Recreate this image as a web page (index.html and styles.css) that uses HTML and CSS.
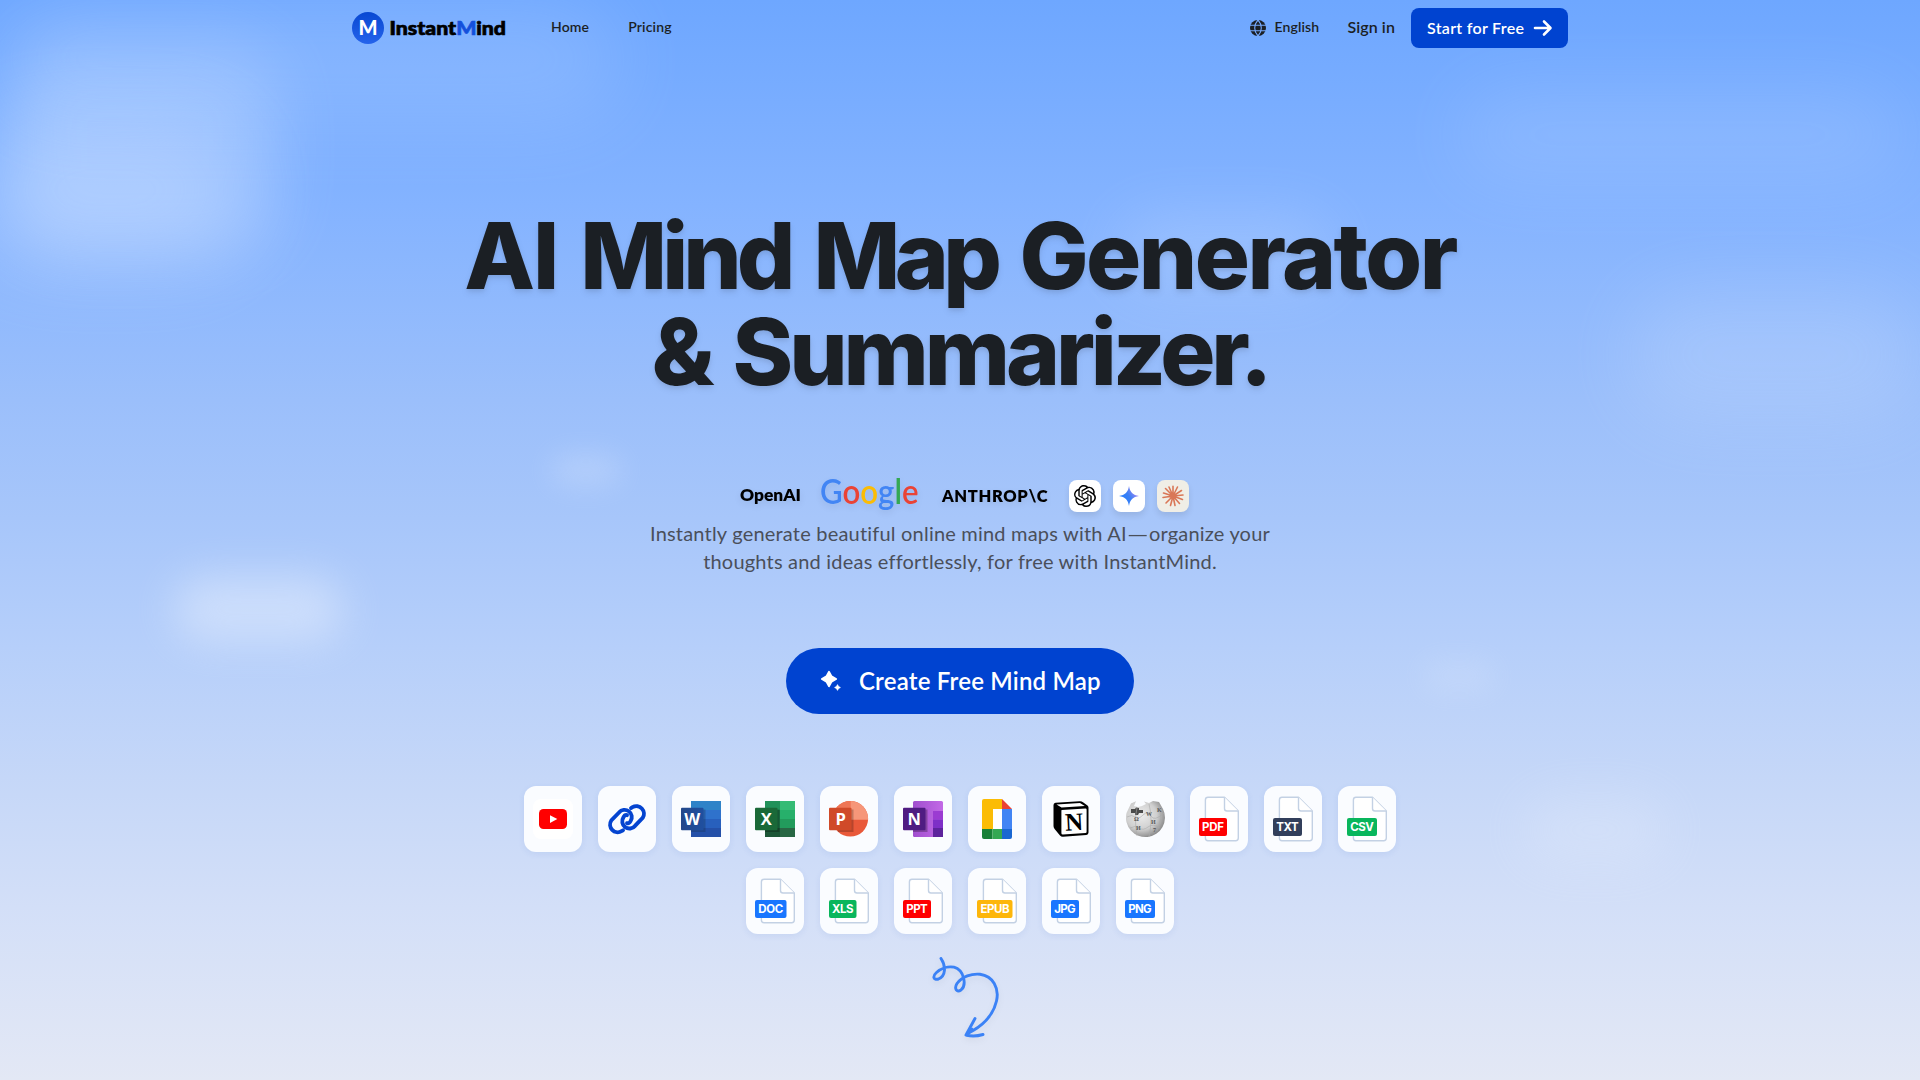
FILE: index.html
```html
<!DOCTYPE html>
<html lang="en">
<head>
<meta charset="utf-8">
<title>InstantMind</title>
<link rel="stylesheet" href="styles.css">
</head>
<body>
<div class="sky" aria-hidden="true">
  <i class="cloud c1"></i><i class="cloud c2"></i><i class="cloud c3"></i><i class="cloud c4"></i><i class="cloud c5"></i>
  <i class="cloud c6"></i><i class="cloud c7"></i><i class="cloud c8"></i><i class="cloud c9"></i><i class="cloud c10"></i>
</div>

<header class="header">
  <a class="brand">
    <svg width="156" height="32" viewBox="0 0 156 32">
      <defs><linearGradient id="lg" x1="0" y1="0" x2="0" y2="1"><stop offset="0" stop-color="#0848d2"/><stop offset="1" stop-color="#2563eb"/></linearGradient></defs>
      <circle cx="16" cy="16" r="16" fill="url(#lg)"/>
      <text class="mark" x="16" y="23">M</text>
      <text class="wordmark" x="37.500" y="23" textLength="116.500" lengthAdjust="spacingAndGlyphs">Instant<tspan class="blue">M</tspan>ind</text>
    </svg>
  </a>
  <nav class="nav"><a>Home</a><a>Pricing</a></nav>
  <div class="actions">
    <a class="lang">
      <svg width="16" height="16" viewBox="0 0 16 16"><circle cx="8" cy="8" r="8" fill="#1b1f24"/><path d="M0 5.300h16M0 10.700h16M8 0C3.600 4.500 3.600 11.500 8 16M8 0c4.400 4.500 4.400 11.500 0 16" fill="none" stroke="#76aaff" stroke-width="1.100"/></svg>
      <span>English</span>
    </a>
    <a class="signin">Sign in</a>
    <a class="start"><span>Start for Free</span>
      <svg width="20" height="18" viewBox="0 0 20 18"><path d="M2 9h15M11 2.500 17.500 9 11 15.500" fill="none" stroke="#fff" stroke-width="2.600" stroke-linecap="round" stroke-linejoin="round"/></svg>
    </a>
  </div>
</header>

<main class="hero">
  <h1 class="title"><span class="line"><span class="w-ai">AI</span> <span class="w-mind">Mind</span> <span class="w-map">Map</span> <span class="w-gen">Generator</span></span><span class="line"><span>&amp;</span> <span class="w-sum">Summarizer.</span></span></h1>

  <div class="partners">
    <svg class="p-openai" width="62" height="32" viewBox="0 0 62 32"><text x="0" y="21" textLength="61" lengthAdjust="spacingAndGlyphs">OpenAI</text></svg>
    <svg class="p-google" width="98" height="48" viewBox="0 0 98 48"><text x="-1" y="32" textLength="98.500" lengthAdjust="spacingAndGlyphs"><tspan fill="#4285f4">G</tspan><tspan fill="#ea4335">o</tspan><tspan fill="#fbbc05">o</tspan><tspan fill="#4285f4">g</tspan><tspan fill="#34a853">l</tspan><tspan fill="#ea4335">e</tspan></text></svg>
    <svg class="p-anthropic" width="106" height="32" viewBox="0 0 106 32"><text x="0" y="22" textLength="105.500" lengthAdjust="spacing">ANTHROP\C</text></svg>
    <div class="models">
      <span class="model"><svg width="22" height="22" viewBox="0 0 24 24"><path d="M22.2819 9.8211a5.9847 5.9847 0 0 0-.5157-4.9108 6.0462 6.0462 0 0 0-6.5098-2.9A6.0651 6.0651 0 0 0 4.9807 4.1818a5.9847 5.9847 0 0 0-3.9977 2.9 6.0462 6.0462 0 0 0 .7427 7.0966 5.98 5.98 0 0 0 .511 4.9107 6.051 6.051 0 0 0 6.5146 2.9001A5.9847 5.9847 0 0 0 13.2599 24a6.0557 6.0557 0 0 0 5.7718-4.2058 5.9894 5.9894 0 0 0 3.9977-2.9001 6.0557 6.0557 0 0 0-.7475-7.0729zm-9.022 12.6081a4.4755 4.4755 0 0 1-2.8764-1.0408l.1419-.0804 4.7783-2.7582a.7948.7948 0 0 0 .3927-.6813v-6.7369l2.02 1.1686a.071.071 0 0 1 .038.052v5.5826a4.504 4.504 0 0 1-4.4945 4.4944zm-9.6607-4.1254a4.4708 4.4708 0 0 1-.5346-3.0137l.142.0852 4.783 2.7582a.7712.7712 0 0 0 .7806 0l5.8428-3.3685v2.3324a.0804.0804 0 0 1-.0332.0615L9.74 19.9502a4.4992 4.4992 0 0 1-6.1408-1.6464zM2.3408 7.8956a4.485 4.485 0 0 1 2.3655-1.9728V11.6a.7664.7664 0 0 0 .3879.6765l5.8144 3.3543-2.0201 1.1685a.0757.0757 0 0 1-.071 0l-4.8303-2.7865A4.504 4.504 0 0 1 2.3408 7.872zm16.5963 3.8558L13.1038 8.364 15.1192 7.2a.0757.0757 0 0 1 .071 0l4.8303 2.7913a4.4944 4.4944 0 0 1-.6765 8.1042v-5.6772a.79.79 0 0 0-.407-.667zm2.0107-3.0231l-.142-.0852-4.7735-2.7818a.7759.7759 0 0 0-.7854 0L9.409 9.2297V6.8974a.0662.0662 0 0 1 .0284-.0615l4.8303-2.7866a4.4992 4.4992 0 0 1 6.6802 4.66zM8.3065 12.863l-2.02-1.1638a.0804.0804 0 0 1-.038-.0567V6.0742a4.4992 4.4992 0 0 1 7.3757-3.4537l-.142.0805L8.704 5.459a.7948.7948 0 0 0-.3927.6813zm1.0976-2.3654l2.602-1.4998 2.6069 1.4998v2.9994l-2.5974 1.4997-2.6067-1.4997Z"/></svg></span>
      <span class="model"><svg width="20" height="20" viewBox="0 0 20 20"><defs><linearGradient id="gem" x1="0" y1=".8" x2="1" y2=".2"><stop offset="0" stop-color="#1c7dff"/><stop offset=".5" stop-color="#3b7ff5"/><stop offset="1" stop-color="#c58af0"/></linearGradient></defs><path d="M10 0C10.800 6 14 9.200 20 10 14 10.800 10.800 14 10 20 9.200 14 6 10.800 0 10 6 9.200 9.200 6 10 0Z" fill="url(#gem)"/></svg></span>
      <span class="model claude"><svg width="22" height="22" viewBox="0 0 22 22"><path d="M11 11V1.200M11 11 15.500 2M11 11 19.500 5.500M11 11 21 10M11 11 20.500 14.500M11 11 17.500 18.500M11 11 13 20.500M11 11 8.500 20.500M11 11 4 18M11 11 1 12.500M11 11 1.500 8M11 11 3.500 3.500M11 11 7 2" stroke="#d97757" stroke-width="1.600" stroke-linecap="round"/></svg></span>
    </div>
  </div>

  <p class="lead"><span class="l1">Instantly generate beautiful online mind maps with AI<span class="dash">—</span>organize your</span><span class="l2">thoughts and ideas effortlessly, for free with InstantMind.</span></p>

  <a class="cta">
    <svg width="22" height="22" viewBox="0 0 22 22" fill="#fff" stroke="#fff" stroke-linejoin="round"><path d="M9 1.800 11.600 6.400 16.200 9 11.600 11.600 9 16.200 6.400 11.600 1.800 9 6.400 6.400Z" stroke-width="1.800"/><path d="M17.500 14.700 18.400 16.600 20.300 17.500 18.400 18.400 17.500 20.300 16.600 18.400 14.700 17.500 16.600 16.600Z" stroke-width="1"/></svg>
    <span>Create Free Mind Map</span>
  </a>

  <div class="formats">
    <span class="card"><svg viewBox="0 0 58 66"><rect x="9" y="13" width="40" height="40" rx="8" fill="#fff"/><rect x="15" y="23" width="28" height="20" rx="4.500" fill="red"/><path d="M26 29.200 33.300 33.100 26 37Z" fill="#fff"/></svg></span>
    <span class="card"><svg viewBox="0 0 58 66"><g fill="none" stroke="#0444d0" stroke-width="3.900" stroke-linecap="round"><path d="M25 44.300 23.500 45.200A7.600 7.600 0 0 1 13.300 34.500L21 26.500A7.200 7.200 0 0 1 32.600 35C31.700 36.800 30.400 37.600 29 37.200"/><path d="M33 22.100 34.500 21.200A7.600 7.600 0 0 1 44.700 31.900L37 39.900A7.200 7.200 0 0 1 25.400 31.400C26.300 29.600 27.600 28.800 29 29.200"/></g></svg></span>
    <span class="card"><svg viewBox="0 0 58 66"><defs><linearGradient id="wb"><stop offset="0" stop-color="#23488a"/><stop offset="1" stop-color="#1f4fa0"/></linearGradient></defs><path fill="#2f83c8" d="M19 15h30v9H19z"/><path fill="#2f72cc" d="M19 24h30v9H19z"/><path fill="#2860bd" d="M19 33h30v9H19z"/><path fill="#2450a8" d="M19 42h30v9H19z"/><path fill="#123" opacity=".25" d="M19 23.500h14.500v22.500H19z"/><rect x="9" y="21.700" width="22.500" height="22.500" rx="1" fill="url(#wb)"/><text class="ms" x="20.200" y="38.800">W</text></svg></span>
    <span class="card"><svg viewBox="0 0 58 66"><path fill="#21915a" d="M19 15h15v9H19z"/><path fill="#35bb75" d="M34 15h15v9H34z"/><path fill="#1d7647" d="M19 24h15v18H19z"/><path fill="#27b06b" d="M34 24h15v9H34z"/><path fill="#229b5c" d="M34 33h15v9H34z"/><path fill="#1c5637" d="M19 42h15v9H19z"/><path fill="#286744" d="M34 42h15v9H34z"/><path opacity=".25" d="M19 23.500h14.500v22.500H19z"/><rect x="9" y="21.700" width="22.500" height="22.500" rx="1" fill="#1a6938"/><text class="ms" x="20.200" y="38.800">X</text></svg></span>
    <span class="card"><svg viewBox="0 0 58 66"><circle cx="30.300" cy="32.800" r="17.800" fill="#e9593a"/><path fill="#f69679" d="M30.300 15a17.800 17.800 0 0 1 17.800 18.800H30.300z"/><path fill="#ee7656" d="M30.300 15A17.800 17.800 0 0 0 12.500 33.800H30.300z"/><path opacity=".22" d="M14 23.500h19.500v22.500H18z"/><rect x="9" y="21.700" width="22.500" height="22.500" rx="1" fill="#d04a29"/><text class="ms" x="20.800" y="38.800">P</text></svg></span>
    <span class="card"><svg viewBox="0 0 58 66"><defs><linearGradient id="on"><stop offset="0" stop-color="#a04fce"/><stop offset="1" stop-color="#c269e6"/></linearGradient></defs><rect x="19" y="15" width="30" height="36" rx="1.500" fill="url(#on)"/><path fill="#9b3bd2" d="M39 25h10v8.500H39z"/><path fill="#7e2fc7" d="M39 33.500h10V42H39z"/><path fill="#5d239c" d="M39 42h10v9H39z"/><path opacity=".25" d="M19 23.500h14.500v22.500H19z"/><rect x="9" y="21.700" width="22.500" height="22.500" rx="1" fill="#4f1c82"/><text class="ms" x="20.200" y="38.800">N</text></svg></span>
    <span class="card"><svg viewBox="0 0 58 66"><path fill="#fbbc05" d="M16 13H34V23H25V43H14V15A2 2 0 0 1 16 13Z"/><path fill="#ea4335" d="M34 13 44 23H34Z"/><path fill="#4285f4" d="M34 23H44V43H34Z"/><path fill="#fff" d="M25 23h9v20h-9z"/><path fill="#188038" d="M14 43H24.500V53H16A2 2 0 0 1 14 51Z"/><path fill="#34a853" d="M24.500 43H34V53H24.500Z"/><path fill="#1967d2" d="M34 43H44V51A2 2 0 0 1 42 53H34Z"/></svg></span>
    <span class="card"><svg viewBox="0 0 58 66"><path d="M13.500 16.800 37.500 15.200Q39.500 15 41 16.200L45.500 19.400Q46.500 20.200 46.500 21.500V46.500Q46.500 48.800 44.300 49.100L21 50.700Q19.200 50.800 18 49.500L12.600 43Q11.500 41.500 11.500 40V19Q11.500 17 13.500 16.800Z"/><path fill="#fff" d="M14.500 18.600 38 16.900 42.800 19.900 19.500 21.400ZM19.800 24 43.500 22.500Q44.600 22.500 44.600 23.600V45.800Q44.600 47 43.500 47.100L20.800 48.500Q19.400 48.500 19.400 47.300V24.700Q19.400 24.100 19.800 24Z"/><text class="notion" x="32.200" y="44.300" transform="rotate(-3 32 36)">N</text></svg></span>
    <span class="card"><svg viewBox="0 0 58 66"><defs><radialGradient id="wk" cx=".4" cy=".4" r=".65"><stop offset="0" stop-color="#ececec"/><stop offset=".6" stop-color="#cfcfcf"/><stop offset="1" stop-color="#858585"/></radialGradient></defs><path fill="url(#wk)" d="M15 17.500 20 15.300 18 20 22 21 26 20 30 18 28 15.500 33 17 37 15 43 16 47 23A19.500 19.500 0 1 1 10.500 27Z"/><path fill="#4b4b4b" d="M15 23h4l1-1.500 3 .5v2h4v3h-4l-1 2h-3v-2h-4z"/><path d="M11 31q5-3 8 0t8-2 8 1 13-3M14 42q5-3 9 0t9-1 12 1M21 22q-3 12 0 28M33 18q4 15 0 33M42 18q6 15-1 27" fill="none" stroke="#aaa" stroke-width=".6"/><g class="wiki"><text x="18" y="35">Ω</text><text x="30" y="30">W</text><text x="20" y="44">И</text><text x="35" y="38">И</text><text x="41" y="26">K</text><text x="37" y="46">7</text></g></svg></span>
    <span class="card"><svg viewBox="0 0 58 66"><use href="#sheet"/><rect x="9" y="32" width="28" height="18" rx="2" fill="red"/><text class="ext" x="23" y="45" textLength="22">PDF</text></svg></span>
    <span class="card"><svg viewBox="0 0 58 66"><use href="#sheet"/><rect x="9" y="32" width="29" height="18" rx="2" fill="#323f5b"/><text class="ext" x="23.500" y="45" textLength="22.500">TXT</text></svg></span>
    <span class="card"><svg viewBox="0 0 58 66"><use href="#sheet"/><rect x="9" y="32" width="30" height="18" rx="2" fill="#09b65c"/><text class="ext" x="24" y="45" textLength="23.500">CSV</text></svg></span>
    <span class="card"><svg viewBox="0 0 58 66"><use href="#sheet"/><rect x="9" y="32" width="31.500" height="18" rx="2" fill="#1976ff"/><text class="ext" x="24.700" y="45" textLength="25">DOC</text></svg></span>
    <span class="card"><svg viewBox="0 0 58 66"><use href="#sheet"/><rect x="9" y="32" width="27.500" height="18" rx="2" fill="#09b65c"/><text class="ext" x="22.800" y="45" textLength="21.500">XLS</text></svg></span>
    <span class="card"><svg viewBox="0 0 58 66"><use href="#sheet"/><rect x="9" y="32" width="28" height="18" rx="2" fill="red"/><text class="ext" x="23" y="45" textLength="21.500">PPT</text></svg></span>
    <span class="card"><svg viewBox="0 0 58 66"><use href="#sheet"/><rect x="9" y="32" width="35.500" height="18" rx="2" fill="#fdb60b"/><text class="ext" x="27" y="45" textLength="29">EPUB</text></svg></span>
    <span class="card"><svg viewBox="0 0 58 66"><use href="#sheet"/><rect x="9" y="32" width="28" height="18" rx="2" fill="#1976ff"/><text class="ext" x="23" y="45" textLength="21.500">JPG</text></svg></span>
    <span class="card"><svg viewBox="0 0 58 66"><use href="#sheet"/><rect x="9" y="32" width="30" height="18" rx="2" fill="#1976ff"/><text class="ext" x="24" y="45" textLength="23.500">PNG</text></svg></span>
  </div>

  <svg class="squiggle" width="70" height="84" viewBox="0 0 70 84"><g fill="none" stroke="#3b82f6" stroke-width="2.900" stroke-linecap="round" stroke-linejoin="round"><path d="M10 2.500C15 10 15 20 7.500 23 2 24.500 1.500 20 5.500 16.500 10 12.500 17 10 23 11.200 33 14 36 29 30 34 25.500 37 23 32.500 26 27.500 31 20 41 17.500 49 18.200 62 20 68.500 32 65.500 45 62 60 50 71 36.500 77.500"/><path d="M44 62.500 35 79C40 80.500 47 80 52 78.500"/><path d="M36 79 41 73"/></g></svg>
</main>

<svg class="defs" width="0" height="0" aria-hidden="true"><defs><g id="sheet" fill="#fff" stroke="#c3d1e4" stroke-width="1.400" stroke-linejoin="round"><path d="M18 11.300H34.500L48.300 25V52Q48.300 54.700 45.600 54.700H18Q15.400 54.700 15.400 52V14Q15.400 11.300 18 11.300Z"/><path d="M34.500 11.300V22.500Q34.500 25 37 25H48.300"/></g></defs></svg>
</body>
</html>
```
FILE: styles.css
```css
* { box-sizing: border-box; }

body {
  margin: 0;
  height: 1080px;
  overflow: hidden;
  position: relative;
  color: #1b1f24;
  font-family: Lato, "Liberation Sans", sans-serif;
  background: linear-gradient(180deg, #6ea7ff 0%, #84b3ff 19%, #9bbffb 37%, #a7c6fa 48%, #b6cffa 60%, #c5d7f8 72%, #d3dff8 84%, #e3e8f5 100%);
}

/* blurred clouds behind the content */
.sky { position: absolute; inset: 0; overflow: hidden; z-index: -1; }
.cloud { position: absolute; background: #fff; border-radius: 60px; }
.c1 { left: 10px; top: 40px; width: 270px; height: 215px; opacity: .17; filter: blur(32px); }
.c2 { left: -20px; top: 120px; width: 260px; height: 140px; opacity: .22; filter: blur(42px); }
.c3 { left: 0; top: 0; width: 620px; height: 120px; opacity: .12; filter: blur(40px); }
.c4 { left: 1460px; top: 90px; width: 440px; height: 90px; opacity: .1; filter: blur(36px); }
.c5 { left: 1630px; top: 290px; width: 290px; height: 130px; opacity: .13; filter: blur(36px); }
.c6 { left: 1120px; top: 215px; width: 210px; height: 70px; opacity: .14; filter: blur(30px); }
.c7 { left: 552px; top: 456px; width: 68px; height: 28px; opacity: .2; filter: blur(14px); }
.c8 { left: 174px; top: 576px; width: 170px; height: 66px; opacity: .34; filter: blur(20px); }
.c9 { left: 1424px; top: 662px; width: 70px; height: 28px; opacity: .13; filter: blur(14px); }
.c10 { left: 1525px; top: 800px; width: 140px; height: 60px; opacity: .17; filter: blur(26px); }

.header {
  width: 1216px;
  height: 56px;
  margin: 0 auto;
  display: flex;
  align-items: center;
  font-weight: 600;
}
.header span, .nav a, .signin { position: relative; top: -1px; }
.brand { display: flex; }
.wordmark { font: 900 19.500px Lato, sans-serif; stroke: #000; stroke-width: .7px; fill: #000; }
.blue { fill: #1450dc; stroke: #1450dc; }
.mark { font: 900 20px Lato, sans-serif; fill: #fff; text-anchor: middle; }
.nav { display: flex; gap: 39px; margin-left: 43px; font-size: 14px; line-height: 20px; letter-spacing: .15px; }
.actions { display: flex; align-items: center; margin-left: auto; }
.lang { display: flex; align-items: center; gap: 8px; font-size: 14px; line-height: 20px; letter-spacing: .15px; }
.signin { margin-left: 28px; font-size: 16px; line-height: 24px; letter-spacing: .1px; }
.start {
  width: 157px;
  height: 40px;
  margin-left: 16px;
  padding: 0 15px 0 16px;
  display: flex;
  align-items: center;
  justify-content: space-between;
  border-radius: 8px;
  background: #0043d0;
  color: #fff;
  font-size: 16px;
  font-weight: 600;
  letter-spacing: .3px;
  white-space: nowrap;
}

.hero { display: flex; flex-direction: column; align-items: center; padding-top: 152px; }
.title {
  margin: 0;
  display: flex;
  flex-direction: column;
  align-items: center;
  font-size: 92px;
  line-height: 96px;
  font-weight: 800;
  font-family: Inter, sans-serif;
  letter-spacing: -5px;
  word-spacing: 8px;
  white-space: nowrap;
  filter: drop-shadow(0 4px 3px rgba(0, 0, 0, .07)) drop-shadow(0 2px 2px rgba(0, 0, 0, .06));
}
.w-ai { letter-spacing: -2px; }
.w-map { letter-spacing: -5.600px; }
.w-gen { letter-spacing: -2.500px; }
.w-sum { letter-spacing: -4.100px; }

.partners {
  height: 32px;
  width: 449px;
  margin: 80px 0 0 9px;
  display: flex;
  align-items: center;
}
.partners svg { overflow: visible; flex: none; }
.partners text { filter: drop-shadow(0 3px 3px rgba(0, 0, 0, .08)); }
.p-openai { font: 800 17.500px Lato, sans-serif; }
.p-google { margin-left: 19px; font: 600 34.500px Lato, sans-serif; }
.p-anthropic { margin-left: 23px; font: 800 16.500px Lato, sans-serif; }
.models { display: flex; gap: 12px; margin-left: auto; }
.model {
  width: 32px;
  height: 32px;
  display: flex;
  align-items: center;
  justify-content: center;
  border-radius: 8px;
  background: #fff;
  box-shadow: 0 4px 6px rgba(0, 0, 0, .09);
}
.claude { background: #f0eee6; }

.lead {
  margin: 7px 0 0;
  display: flex;
  flex-direction: column;
  align-items: center;
  font-size: 20px;
  line-height: 28px;
  color: #4a4f5a;
  white-space: nowrap;
}
.l1 { letter-spacing: .2px; }
.l2 { letter-spacing: .2px; }
.dash { display: inline-block; width: 22px; transform: scaleX(1.350); transform-origin: 0 50%; }

.cta {
  width: 348px;
  height: 66px;
  margin-top: 73px;
  padding-left: 34px;
  display: flex;
  align-items: center;
  gap: 17px;
  border-radius: 33px;
  background: #0043d0;
  color: #fff;
  font-size: 24px;
  font-weight: 600;
  letter-spacing: .2px;
  white-space: nowrap;
}
.cta span { position: relative; top: -1px; }

.formats { width: 872px; margin-top: 72px; display: flex; flex-wrap: wrap; justify-content: center; gap: 16px; }
.card { width: 58px; height: 66px; border-radius: 12px; background: #fafcff; box-shadow: 0 2px 6px rgba(60, 100, 190, .09); }
.card svg { display: block; width: 58px; height: 66px; }
.ms { font: 700 16.500px "Open Sans", sans-serif; fill: #fff; text-anchor: middle; }
.notion { font: 700 25px "Liberation Serif", serif; text-anchor: middle; }
.wiki { font: 700 6px "Liberation Serif", serif; fill: #555; }
.ext { font: 700 11.500px Inter, sans-serif; fill: #fff; text-anchor: middle; }

.squiggle { margin: 22px 0 0 11px; filter: drop-shadow(0 3px 3px rgba(0, 0, 0, .05)); }
.defs { display: block; }
```
